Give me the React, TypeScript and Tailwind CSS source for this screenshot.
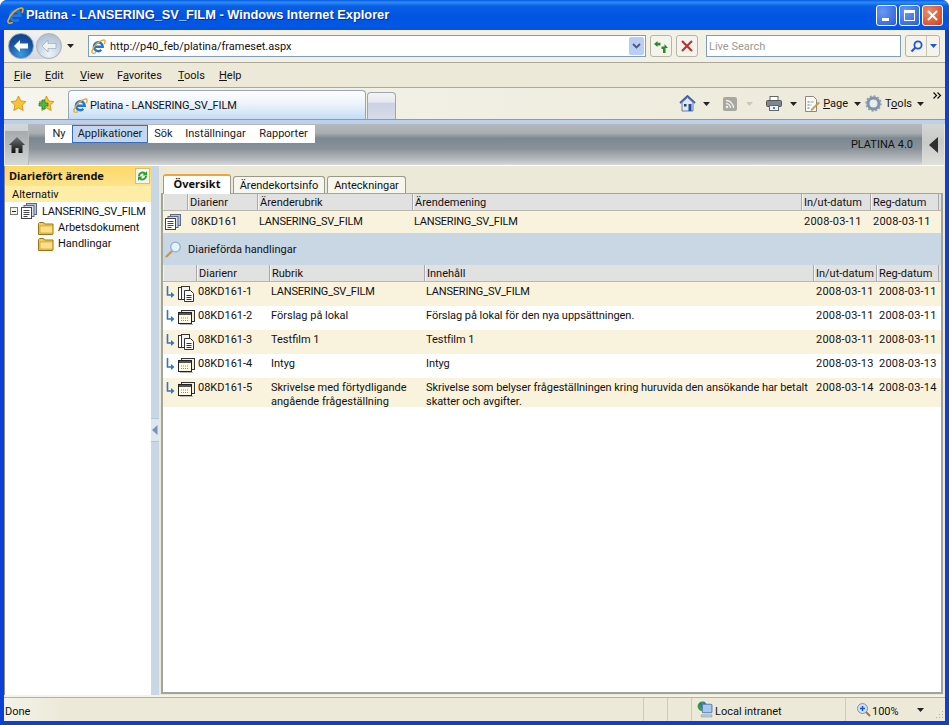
import React from 'react';

const IeLogo = ({ size = 16 }: { size?: number }) => (
  <svg width={size} height={size} viewBox="0 0 16 16" className="shrink-0">
    <path d="M3.600 8.200h8.900A4.700 4.700 0 1 0 11 11.700" fill="none" stroke="#2277d4" strokeWidth="2.600" />
    <path d="M1 13C2.500 7.500 8.500 1.500 13.500 1c2-.2 1.800 2.500.6 4.500" fill="none" stroke="#e9a92a" strokeWidth="1.500" />
    <path d="M1 12.500c-.8 3 1.500 3.300 4.500 2" fill="none" stroke="#e9a92a" strokeWidth="1.400" />
  </svg>
);

const ArrowNav = ({ back }: { back?: boolean }) => (
  <div className={back
    ? 'w-[26px] h-[26px] rounded-full flex items-center justify-center border border-[#8fa3bd] bg-[radial-gradient(circle_at_50%_85%,#3c9be0,#14509e_60%,#0d3d83)]'
    : 'w-[26px] h-[26px] rounded-full flex items-center justify-center border border-[#a9b3c0] bg-[radial-gradient(circle_at_50%_85%,#eef3f8,#bccadb_65%,#a8b6c8)]'}>
    <svg width="16" height="14" viewBox="0 0 16 14">
      <path d="M1 7l6-6v3.500h8v5H7V13z" fill={back ? '#ffffff' : '#eef1f5'} stroke={back ? 'none' : '#8f9fb3'} strokeWidth=".6" />
    </svg>
  </div>
);

const Caret = ({ color = '#222' }: { color?: string }) => (
  <svg width="7" height="4" viewBox="0 0 7 4" className="shrink-0">
    <path d="M0 0h7L3.500 4z" fill={color} />
  </svg>
);

const Star = ({ plus }: { plus?: boolean }) => (
  <svg width="17" height="17" viewBox="0 0 17 17">
    <path d="M8.500 1l2.300 4.900 5.200.7-3.800 3.600 1 5.300-4.700-2.600-4.700 2.600 1-5.300L1 6.600l5.200-.7z" fill="#f9c42f" stroke="#c98a1a" strokeWidth=".8" />
    {plus && <path d="M1 8h3V5h3v3h3v3H7v3H4v-3H1z" fill="#4fb84a" stroke="#23801f" strokeWidth=".7" />}
  </svg>
);

const DocStack = () => (
  <svg width="16" height="16" viewBox="0 0 16 16" className="shrink-0">
    <rect x="5.500" y=".5" width="10" height="11" fill="#b9c4dc" stroke="#5a6a88" />
    <rect x="3" y="2.500" width="10" height="11" fill="#d7deec" stroke="#5a6a88" />
    <rect x=".5" y="4.500" width="10" height="11" fill="#fff" stroke="#444" />
    <path d="M2.500 7.500h6M2.500 9.500h6M2.500 11.500h6M2.500 13.500h4" stroke="#444" />
  </svg>
);

const Folder = () => (
  <svg width="16" height="14" viewBox="0 0 16 14" className="shrink-0">
    <path d="M.5 13V2.500l1-1h4l1 1.500h8.500V13l-.5.500h-14z" fill="#f5c94f" stroke="#9a7416" />
    <path d="M2 5h12.500v7H2z" fill="#fbe08a" stroke="#c99f2e" strokeWidth=".7" />
  </svg>
);

const BranchArrow = () => (
  <svg width="9" height="12" viewBox="0 0 9 12" className="shrink-0">
    <path d="M1.500 0v9H5" fill="none" stroke="#3a73b5" strokeWidth="1.600" />
    <path d="M5 6l3.500 3L5 12z" fill="#3a73b5" />
  </svg>
);

const DocCopies = () => (
  <svg width="17" height="16" viewBox="0 0 17 16" className="shrink-0">
    <rect x=".5" y="1.500" width="9" height="12" fill="#fff" stroke="#333" />
    <rect x="3.500" y=".5" width="8" height="13" fill="#f3f3f3" stroke="#333" />
    <path d="M6.500 4.500h6l3 3v8h-9z" fill="#fff" stroke="#333" />
    <path d="M8.500 9.500h5M8.500 11.500h5M8.500 13.500h5" stroke="#333" />
  </svg>
);

const WindowDoc = () => (
  <svg width="17" height="16" viewBox="0 0 17 16" className="shrink-0">
    <rect x="3.500" y=".5" width="13" height="11" fill="#f3f0d8" stroke="#333" />
    <rect x=".5" y="2.500" width="13" height="11" fill="#fffbe6" stroke="#222" />
    <path d="M1 3h12v2H1z" fill="#555" />
    <path d="M3 8h8M3 10.500h8" stroke="#888" strokeDasharray="1 1" />
    <path d="M2 14.500h13" stroke="#b5b5b5" />
  </svg>
);

const Magnifier = () => (
  <svg width="17" height="17" viewBox="0 0 17 17">
    <path d="M1.500 15.500l5-5" stroke="#c79a4a" strokeWidth="2.400" strokeLinecap="round" />
    <circle cx="10.500" cy="6" r="4.800" fill="#e6f2fb" stroke="#8fb0cc" strokeWidth="1.300" />
  </svg>
);

const MenuItem = ({ k, rest, pre = '' }: { k: string; rest: string; pre?: string }) => (
  <span>{pre}<u>{k}</u>{rest}</span>
);

const HeadCell = ({ w, label }: { w: string; label?: string }) => (
  <div className={`${w} h-full border-l border-[#f4f4f4] border-r border-r-[#a9a9a9] pl-[1px] leading-[18px] truncate`}>{label}</div>
);

const overviewCols = ['w-[25px]', 'w-[70px]', 'w-[155px]', 'w-[389px]', 'w-[69px]', 'w-[69px]'];

const docs = [
  { nr: '08KD161-1', rub: 'LANSERING_SV_FILM', inn: 'LANSERING_SV_FILM', io: '2008-03-11', reg: '2008-03-11', kind: 'copy' },
  { nr: '08KD161-2', rub: 'Förslag på lokal', inn: 'Förslag på lokal för den nya uppsättningen.', io: '2008-03-11', reg: '2008-03-11', kind: 'win' },
  { nr: '08KD161-3', rub: 'Testfilm 1', inn: 'Testfilm 1', io: '2008-03-11', reg: '2008-03-11', kind: 'copy' },
  { nr: '08KD161-4', rub: 'Intyg', inn: 'Intyg', io: '2008-03-13', reg: '2008-03-13', kind: 'win' },
  {
    nr: '08KD161-5',
    rub: 'Skrivelse med förtydligande angående frågeställning',
    inn: 'Skrivelse som belyser frågeställningen kring huruvida den ansökande har betalt skatter och avgifter.',
    io: '2008-03-14',
    reg: '2008-03-14',
    kind: 'win',
  },
];

export default function App() {
  return (
    <div className="w-[949px] h-[725px] overflow-hidden flex flex-col bg-[#0a3fd8] rounded-t-[7px] text-[11px] text-[#111] font-['Roboto','Noto_Sans',sans-serif]">
      {/* title bar */}
      <div className="h-[30px] shrink-0 flex items-center pl-[7px] pr-[6px] rounded-t-[7px] bg-[linear-gradient(#0a5be6_0%,#2b8cf5_8%,#0a5fe6_20%,#0054e3_55%,#0158e6_85%,#0a50d8_100%)]">
        <IeLogo size={17} />
        <span className="ml-[2px] text-white font-bold text-[12.8px] font-['Liberation_Sans',sans-serif] [text-shadow:1px_1px_0_#0a2f90]">
          Platina - LANSERING_SV_FILM - Windows Internet Explorer
        </span>
        <div className="ml-auto flex gap-[2px]">
          <div className="w-[21px] h-[21px] rounded-[3px] border border-white bg-[radial-gradient(circle_at_30%_30%,#6a98f0,#2a5cd8)] flex items-end pl-[5px] pb-[4px]">
            <div className="w-[7px] h-[3px] bg-white" />
          </div>
          <div className="w-[21px] h-[21px] rounded-[3px] border border-white bg-[radial-gradient(circle_at_30%_30%,#6a98f0,#2a5cd8)] flex items-center justify-center">
            <div className="w-[11px] h-[11px] border border-white border-t-[3px]" />
          </div>
          <div className="w-[21px] h-[21px] rounded-[3px] border border-white bg-[radial-gradient(circle_at_30%_30%,#ee8a66,#d4401c)] flex items-center justify-center">
            <svg width="11" height="11" viewBox="0 0 11 11"><path d="M1 1l9 9M10 1l-9 9" stroke="#fff" strokeWidth="2" /></svg>
          </div>
        </div>
      </div>

      <div className="flex-1 min-h-0 flex flex-col mx-[4px] bg-[#ece9d8]">
        {/* address row */}
        <div className="h-[33px] shrink-0 flex items-center bg-[#f3f1e6] border-b border-b-[#aca899] pl-[4px]">
          <div className="flex gap-[2px] rounded-full bg-[linear-gradient(#eef0f3,#d5d9df)]">
            <ArrowNav back />
            <ArrowNav />
          </div>
          <div className="ml-[5px]"><Caret /></div>
          <div className="ml-[14px] w-[558px] h-[22px] bg-white border border-[#7f9db9] flex items-center pl-[2px] pr-[1px]">
            <IeLogo size={15} />
            <span className="ml-[4px] pt-[2px]">http://p40_feb/platina/frameset.aspx</span>
            <div className="ml-auto w-[15px] h-[18px] rounded-[2px] bg-[#b9cdf5] flex items-center justify-center">
              <svg width="9" height="6" viewBox="0 0 9 6"><path d="M1 1l3.500 3.500L8 1" fill="none" stroke="#4a5a7c" strokeWidth="1.800" /></svg>
            </div>
          </div>
          <div className="ml-[4px] w-[22px] h-[22px] rounded-[3px] border border-[#b5b5a5] bg-[#f5f4ec] flex items-center justify-center">
            <svg width="14" height="13" viewBox="0 0 14 13">
              <path d="M0 4l3.500-3v1.800h3V5.500h-3V7z" fill="#2a8a2a" />
              <path d="M14 8l-3.500-4v2.500h-3v2.500h1.500V13h2.500V8z" fill="#2a8a2a" />
            </svg>
          </div>
          <div className="ml-[4px] w-[22px] h-[22px] rounded-[3px] border border-[#b5b5a5] bg-[#f5f4ec] flex items-center justify-center">
            <svg width="12" height="12" viewBox="0 0 12 12"><path d="M1 1l10 10M11 1L1 11" stroke="#b5363a" strokeWidth="2.200" /></svg>
          </div>
          <div className="ml-[8px] w-[195px] h-[22px] bg-white border border-[#7f9db9] flex items-center pl-[2px] pt-[2px] text-[#9a9a90]">Live Search</div>
          <div className="ml-[4px] w-[35px] h-[22px] rounded-[3px] border border-[#b5b5a5] bg-[#f5f4ec] flex">
            <div className="w-[21px] border-r border-[#c5c5b5] flex items-center justify-center">
              <svg width="13" height="13" viewBox="0 0 13 13">
                <circle cx="8" cy="5" r="3.600" fill="none" stroke="#1f55d8" strokeWidth="1.800" />
                <path d="M5.500 7.500L1.500 11.500" stroke="#1f55d8" strokeWidth="2.200" />
              </svg>
            </div>
            <div className="flex-1 flex items-center justify-center"><Caret color="#1f55d8" /></div>
          </div>
        </div>

        {/* menu row */}
        <div className="h-[25px] shrink-0 flex items-center border-b border-b-[#aca899] pl-[10px] pt-[2px]">
          <div className="w-[31px]"><MenuItem k="F" rest="ile" /></div>
          <div className="w-[35px]"><MenuItem k="E" rest="dit" /></div>
          <div className="w-[37px]"><MenuItem k="V" rest="iew" /></div>
          <div className="w-[61px]"><MenuItem pre="F" k="a" rest="vorites" /></div>
          <div className="w-[41px]"><MenuItem k="T" rest="ools" /></div>
          <div><MenuItem k="H" rest="elp" /></div>
        </div>

        {/* tab row */}
        <div className="h-[32px] shrink-0 flex items-end bg-[linear-gradient(90deg,#f6f5ee,#ece9d8)] border-b border-b-[#9a9a8a] pl-[6px] relative">
          <div className="self-center flex gap-[11px]">
            <Star />
            <Star plus />
          </div>
          <div className="ml-[13px] w-[298px] h-[29px] rounded-t-[4px] border border-b-0 border-[#9aa5b5] flex items-center pl-[4px] bg-[linear-gradient(#fdfdfd_0%,#f0f5fb_40%,#c5ddf5_100%)]">
            <IeLogo size={15} />
            <span className="ml-[2px] pt-[2px] tracking-[-0.1px]">Platina - LANSERING_SV_FILM</span>
          </div>
          <div className="ml-[1px] w-[29px] h-[27px] rounded-t-[4px] border border-b-0 border-[#a0a5b0] bg-[linear-gradient(#f4f4f6_0%,#e6e8f0_35%,#ccd2e4_40%,#d8dcea_100%)]" />
          <div className="ml-auto self-center flex items-center pr-[21px]">
            <svg width="17" height="17" viewBox="0 0 17 17">
              <path d="M1 8l7.500-7L16 8" fill="none" stroke="#3a5fb5" strokeWidth="1.800" />
              <path d="M3 7.500V16h11V7.500L8.500 2.500z" fill="#e4e8f4" stroke="#6a7a9a" />
              <rect x="9.500" y="9" width="3" height="7" fill="#1f4f9f" />
              <rect x="5" y="9" width="2.500" height="2.500" fill="#1f3f7f" />
            </svg>
            <div className="ml-[7px]"><Caret /></div>
            <div className="ml-[13px] w-[14px] h-[14px] rounded-[2px] bg-[#a8a89e] flex items-center justify-center">
              <svg width="10" height="10" viewBox="0 0 10 10">
                <circle cx="2" cy="8" r="1.300" fill="#eee" />
                <path d="M1 4.500a4.500 4.500 0 0 1 4.500 4.500M1 1.500A7.500 7.500 0 0 1 8.500 9" fill="none" stroke="#eee" strokeWidth="1.300" />
              </svg>
            </div>
            <div className="ml-[9px]"><Caret color="#c8c8bc" /></div>
            <div className="ml-[13px]">
              <svg width="16" height="15" viewBox="0 0 16 15">
                <rect x="4" y=".5" width="8" height="5" fill="#fff" stroke="#666" />
                <rect x=".5" y="4.500" width="15" height="6" rx="1" fill="#7d8794" stroke="#555" />
                <rect x="3.500" y="9.500" width="9" height="5" fill="#f2f2f2" stroke="#666" />
                <rect x="7" y="11" width="2" height="2" fill="#3a7fc5" />
              </svg>
            </div>
            <div className="ml-[8px]"><Caret /></div>
            <div className="ml-[7px]">
              <svg width="16" height="16" viewBox="0 0 16 16">
                <path d="M1.500.5h8l3 3v12h-11z" fill="#fbfbf6" stroke="#8a8a80" />
                <path d="M3.500 6h2M3.500 9h2M3.500 12h2" stroke="#4a70b0" />
                <path d="M6.500 6h3M6.500 9h1" stroke="#999" />
                <path d="M7.500 13l7-7 1 1-7 7-1.500.5z" fill="#e5a53a" stroke="#a0701c" strokeWidth=".5" />
              </svg>
            </div>
            <span className="ml-[3px] pt-[2px]"><u>P</u>age</span>
            <div className="ml-[6px]"><Caret /></div>
            <div className="ml-[4px]">
              <svg width="17" height="17" viewBox="0 0 17 17">
                <circle cx="8.500" cy="8.500" r="5.500" fill="none" stroke="#7f93aa" strokeWidth="3" />
                <circle cx="8.500" cy="8.500" r="7.300" fill="none" stroke="#8ea0b5" strokeWidth="1.800" strokeDasharray="2 1.800" />
                <circle cx="8.500" cy="8.500" r="3.200" fill="#e7edf4" />
              </svg>
            </div>
            <span className="ml-[3px] pt-[2px]">T<u>o</u>ols</span>
            <div className="ml-[5px]"><Caret /></div>
          </div>
          <svg width="9" height="7" viewBox="0 0 9 7" className="absolute right-[3px] top-[4px]">
            <path d="M.5.500L3.500 3.500.5 6.500M4.500.500l3 3-3 3" fill="none" stroke="#111" strokeWidth="1.200" />
          </svg>
        </div>

        {/* page */}
        <div className="flex-1 min-h-0 flex flex-col border-t-[4px] border-t-[#bcd0ec] pl-[1px] pr-[1px]">
          {/* app header */}
          <div className="h-[42px] shrink-0 flex items-stretch border-b border-b-white bg-[linear-gradient(#b5b9bd_0%,#a9aeb3_22%,#7d8790_35%,#8a9299_60%,#bcc0c4_90%,#d8dadc_100%)]">
            <div className="w-[24px] border-r border-r-[#b5b8ba] flex items-center justify-center bg-[linear-gradient(#d4d7d9_0%,#cfd2d4_17%,#a6abaf_18%,#b9bcbf_55%,#d6d8d8_100%)]">
              <svg width="16" height="16" viewBox="0 0 16 16">
                <defs>
                  <linearGradient id="homeFill" x1="0" y1="0" x2="0" y2="1">
                    <stop offset="0" stopColor="#6f7376" />
                    <stop offset="1" stopColor="#111" />
                  </linearGradient>
                </defs>
                <path d="M8 0L0 8h2.500v8h4v-5h3v5h4V8H16z" fill="url(#homeFill)" />
              </svg>
            </div>
            <div className="ml-[16px] mt-[1px] h-[18px] bg-white flex text-[#1a1a1a] leading-[18px] pl-[1px]">
              <div className="w-[26px] text-center">Ny</div>
              <div className="w-[76px] text-center bg-[#c3d7f0] border border-[#3a6fc0] leading-[16px]">Applikationer</div>
              <div className="w-[31px] text-center">Sök</div>
              <div className="w-[73px] text-center">Inställningar</div>
              <div className="w-[63px] text-center">Rapporter</div>
            </div>
            <div className="ml-auto self-center pt-[2px] mr-[9px]">PLATINA 4.0</div>
            <div className="w-[22px] bg-[linear-gradient(#d4d6d5,#c8cac8_45%,#e0e0dc)] flex items-center justify-center">
              <svg width="9" height="16" viewBox="0 0 9 16"><path d="M9 0v16L0 8z" fill="#2f2f2f" /></svg>
            </div>
          </div>

          <div className="flex-1 min-h-0 flex border-b-2 border-b-[#f5f3e8]">
            {/* sidebar */}
            <div className="w-[146px] shrink-0 bg-white flex flex-col border-l border-l-[#8a8a80] -ml-[1px] box-content">
              <div className="h-[20px] flex items-center pl-[4px] pr-[1px] font-bold font-['Noto_Sans',sans-serif] bg-[linear-gradient(#fdd866,#fde38c)]">
                <span>Diariefört ärende</span>
                <div className="ml-auto w-[15px] h-[16px] bg-[#f7f7ee] border border-[#c5c09a] flex items-center justify-center">
                  <svg width="11" height="12" viewBox="0 0 11 12">
                    <path d="M1 6a4.500 4.500 0 0 1 7.500-3.300L10 1v4.500H5.500L7 4A2.500 2.500 0 0 0 3 6z" fill="#2f9c2f" />
                    <path d="M10 6a4.500 4.500 0 0 1-7.500 3.300L1 11V6.500h4.500L4 8a2.500 2.500 0 0 0 4-2z" fill="#2f9c2f" />
                  </svg>
                </div>
              </div>
              <div className="h-[16px] leading-[17px] pl-[7px] bg-[#fdeda6]">Alternativ</div>
              <div className="flex items-center h-[18px] pl-[5px]">
                <div className="w-[8px] h-[8px] border border-[#7a7a70] flex items-center justify-center bg-[#f3f3ec]">
                  <div className="w-[4px] h-[1px] bg-[#222]" />
                </div>
                <div className="ml-[3px]"><DocStack /></div>
                <span className="ml-[5px] pt-[2px] tracking-[-0.2px]">LANSERING_SV_FILM</span>
              </div>
              <div className="flex items-center h-[16px] pl-[33px]">
                <Folder />
                <span className="ml-[4px]">Arbetsdokument</span>
              </div>
              <div className="flex items-center h-[16px] pl-[33px]">
                <Folder />
                <span className="ml-[4px]">Handlingar</span>
              </div>
            </div>

            {/* splitter */}
            <div className="w-[8px] shrink-0 flex flex-col bg-[#c9d7e5]">
              <div className="h-[252px] shrink-0" />
              <div className="h-[24px] shrink-0 bg-[#dde7f2] border-y border-[#b5c4d6] flex items-center justify-center">
                <svg width="6" height="10" viewBox="0 0 6 10"><path d="M5.500 0v10L0 5z" fill="#7d93ad" /></svg>
              </div>
            </div>

            {/* main */}
            <div className="flex-1 min-w-0 flex flex-col pl-[2px] pr-[1px] pb-[1px]">
              <div className="h-[27px] shrink-0 flex items-end pl-[2px] gap-[1px] relative z-10">
                <div className="w-[68px] h-[20px] -mb-[1px] rounded-t-[3px] border border-b-0 border-[#9a9a8a] border-t-2 border-t-[#f0a53a] bg-white font-bold font-['Noto_Sans',sans-serif] text-center leading-[16px]">Översikt</div>
                <div className="w-[92px] h-[17px] ml-[1px] rounded-t-[3px] border border-b-0 border-[#9a9a8a] bg-[#f7f6ee] text-center leading-[17px]">Ärendekortsinfo</div>
                <div className="w-[79px] h-[17px] ml-[1px] rounded-t-[3px] border border-b-0 border-[#9a9a8a] bg-[#f7f6ee] text-center leading-[17px]">Anteckningar</div>
              </div>
              <div className="flex-1 min-h-0 border-2 border-t border-[#a2a59e] bg-white">
                <div className="h-[16px] flex bg-[#e1e1e1] border-b border-b-[#b8b8ac] box-content">
                  <HeadCell w="w-[25px]" />
                  <HeadCell w="w-[70px]" label="Diarienr" />
                  <HeadCell w="w-[155px]" label="Ärenderubrik" />
                  <HeadCell w="w-[389px]" label="Ärendemening" />
                  <HeadCell w="w-[69px]" label="In/ut-datum" />
                  <HeadCell w="w-[68px]" label="Reg-datum" />
                </div>
                <div className="h-[22px] flex items-center bg-[#f9f3de]">
                  <div className={`${overviewCols[0]} pl-[2px]`}><DocStack /></div>
                  <div className={`${overviewCols[1]} pl-[3px] tracking-[0.2px]`}>08KD161</div>
                  <div className={`${overviewCols[2]} pl-[1px] tracking-[-0.2px]`}>LANSERING_SV_FILM</div>
                  <div className={`${overviewCols[3]} pl-[1px] tracking-[-0.2px]`}>LANSERING_SV_FILM</div>
                  <div className={`${overviewCols[4]} pl-[2px] tracking-[0.2px]`}>2008-03-11</div>
                  <div className={`${overviewCols[5]} pl-[2px] tracking-[0.2px]`}>2008-03-11</div>
                </div>
                <div className="h-[32px] flex items-center bg-[#c9d7e5] pl-[2px]">
                  <Magnifier />
                  <span className="ml-[6px] pt-[3px]">Diarieförda handlingar</span>
                </div>
                <div className="h-[16px] flex bg-[#e1e1e1] border-b border-b-[#b8b8ac] box-content">
                  <HeadCell w="w-[34px]" />
                  <HeadCell w="w-[73px]" label="Diarienr" />
                  <HeadCell w="w-[155px]" label="Rubrik" />
                  <HeadCell w="w-[389px]" label="Innehåll" />
                  <HeadCell w="w-[63px]" label="In/ut-datum" />
                  <HeadCell w="w-[62px]" label="Reg-datum" />
                </div>
                {docs.map((d, i) => (
                  <div key={d.nr} className={`flex items-start pt-[3px] leading-[14px] ${i % 2 === 0 ? 'bg-[#f9f3de]' : 'bg-white'} ${i === 4 ? 'h-[29px]' : 'h-[24px]'}`}>
                    <div className="w-[34px] flex pl-[3px] gap-[3px] pt-[1px]">
                      <BranchArrow />
                      {d.kind === 'copy' ? <DocCopies /> : <WindowDoc />}
                    </div>
                    <div className="w-[73px] pl-[1px]">{d.nr}</div>
                    <div className={`w-[155px] pl-[1px] pr-[2px] ${i === 0 ? 'tracking-[-0.2px]' : ''}`}>{d.rub}</div>
                    <div className={`w-[389px] pl-[1px] pr-[6px] ${i === 0 ? 'tracking-[-0.2px]' : 'tracking-[-0.05px]'}`}>{d.inn}</div>
                    <div className="w-[63px] pl-[2px] tracking-[0.2px]">{d.io}</div>
                    <div className="w-[62px] pl-[2px] tracking-[0.2px]">{d.reg}</div>
                  </div>
                ))}
              </div>
            </div>
          </div>

          {/* status bar */}
          <div className="h-[24px] shrink-0 flex items-center border-t border-t-[#b5b2a0] bg-[linear-gradient(90deg,#f4f3ea,#ece9d8_60px)] -mx-[1px] pl-[1px]">
            <span className="pt-[5px]">Done</span>
            <div className="ml-auto h-full flex items-center">
              <div className="w-[24px] h-full border-l border-[#cfccb8]" />
              <div className="w-[24px] h-full border-l border-[#cfccb8]" />
              <div className="w-[154px] h-full border-l border-[#cfccb8] flex items-center pl-[4px]">
                <svg width="17" height="17" viewBox="0 0 16 16">
                  <circle cx="6" cy="5" r="4.500" fill="#3a9a4a" />
                  <path d="M3 2.500c2 0 3 1 2 3M7 .8l2 3" stroke="#2a6fc0" strokeWidth="1.500" fill="none" />
                  <rect x="6" y="3" width="9" height="8" rx="1" fill="#a6c8ee" stroke="#5a80b0" />
                  <path d="M5 13h10v2H5z" fill="#c0cde0" stroke="#7a8aa5" strokeWidth=".5" />
                </svg>
                <span className="ml-[2px] pt-[5px]">Local intranet</span>
              </div>
              <div className="w-[100px] h-full border-l border-[#cfccb8] flex items-center pl-[11px] relative">
                <svg width="14" height="14" viewBox="0 0 14 14">
                  <path d="M8 8l5 5" stroke="#9c7a3a" strokeWidth="2" />
                  <circle cx="5.500" cy="5.500" r="5" fill="#cfe0f5" stroke="#7a95b5" />
                  <path d="M3 5.500h5M5.500 3v5" stroke="#1f55c0" strokeWidth="1.500" />
                </svg>
                <span className="ml-[1px] pt-[5px]">100%</span>
                <div className="ml-[18px]"><Caret /></div>
                <svg width="10" height="10" viewBox="0 0 10 10" className="absolute right-[1px] bottom-[1px]">
                  <path d="M8 1h1v1H8zM5 4h1v1H5zM8 4h1v1H8zM2 7h1v1H2zM5 7h1v1H5zM8 7h1v1H8z" fill="#b0ad9a" />
                </svg>
              </div>
            </div>
          </div>
        </div>
      </div>
      <div className="h-[4px] shrink-0" />
    </div>
  );
}
